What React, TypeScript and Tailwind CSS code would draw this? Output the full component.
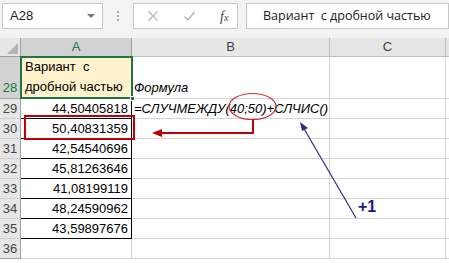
import React from "react";

const rows = [
  { n: "29", a: "44,50405818", b: "=СЛУЧМЕЖДУ(40;50)+СЛЧИС()" },
  { n: "30", a: "50,40831359", b: "" },
  { n: "31", a: "42,54540696", b: "" },
  { n: "32", a: "45,81263646", b: "" },
  { n: "33", a: "41,08199119", b: "" },
  { n: "34", a: "48,24590962", b: "" },
  { n: "35", a: "43,59897676", b: "" },
];

function FormulaBar() {
  return (
    <div className="h-[38px] bg-[#f3f3f3] flex items-start pt-[3px] pl-[2px]">
      <div className="w-[101px] h-[26px] bg-white border border-[#c6c6c6] flex items-center justify-between pl-[7px] pr-[7px]">
        <span className="text-[13px] text-[#222]">A28</span>
        <span className="w-0 h-0 border-l-[4px] border-r-[4px] border-t-[4px] border-l-transparent border-r-transparent border-t-[#777]" />
      </div>
      <div className="w-[30px] h-[26px] flex flex-col items-center justify-center gap-[2px]">
        <span className="w-[2px] h-[2px] bg-[#aaa]" />
        <span className="w-[2px] h-[2px] bg-[#aaa]" />
        <span className="w-[2px] h-[2px] bg-[#aaa]" />
      </div>
      <div className="w-[105px] h-[26px] bg-white border border-[#c6c6c6] flex items-center pl-[13px] gap-[24px]">
        <svg width="12" height="12" viewBox="0 0 12 12">
          <path d="M1.5 1.5 L10.5 10.5 M10.5 1.5 L1.5 10.5" stroke="#b5b5b5" strokeWidth="1.2" />
        </svg>
        <svg width="13" height="12" viewBox="0 0 13 12">
          <path d="M1.5 6.5 L5 10 L11.5 2" stroke="#b5b5b5" strokeWidth="1.4" fill="none" />
        </svg>
        <span className="font-['Liberation_Serif'] italic text-[14px] text-[#444]">f<span className="text-[10px]">x</span></span>
      </div>
      <div className="ml-[8px] flex-1 h-[26px] bg-white border border-[#c6c6c6] flex items-center pl-[16px]">
        <span className="text-[12.5px] text-[#222] whitespace-pre font-['Open_Sans']">Вариант  с дробной частью</span>
      </div>
    </div>
  );
}

export default function App() {
  return (
    <div className="relative w-[449px] h-[263px] overflow-hidden bg-white font-['Liberation_Sans',sans-serif] text-[13px] text-black">
      <FormulaBar />
      <div className="grid grid-cols-[21px_111px_198px_116px_20px] grid-rows-[19px_42px_repeat(8,20px)]">
        {/* header row */}
        <div className="bg-[#e6e6e6] border-r border-b border-[#a0a0a0] relative">
          <svg className="absolute right-[2px] bottom-[2px]" width="11" height="11" viewBox="0 0 11 11">
            <path d="M11 0 L11 11 L0 11 Z" fill="#b4b4b4" />
          </svg>
        </div>
        <div className="bg-[#d2d2d2] border-r border-b border-[#9e9e9e] flex items-center justify-center text-[13px] text-[#217346]">A</div>
        <div className="bg-[#e6e6e6] border-r border-b border-[#bcbcbc] flex items-center justify-center text-[13px] text-[#444]">B</div>
        <div className="bg-[#e6e6e6] border-r border-b border-[#bcbcbc] flex items-center justify-center text-[13px] text-[#444]">C</div>
        <div className="bg-[#e6e6e6] border-b border-[#bcbcbc]" />

        {/* row 28 */}
        <div className="bg-[#d2d2d2] border-r border-b border-[#a0a0a0] flex items-end justify-center pb-[1px] leading-[18px] text-[#217346]">28</div>
        <div className="bg-[#fff2cc] border-r border-b border-[#d4d4d4] flex flex-col justify-end pl-[4px] pb-[1px] leading-[20px] whitespace-pre">
          <span>Вариант  с</span>
          <span>дробной частью</span>
        </div>
        <div className="border-r border-b border-[#d4d4d4] flex items-end pl-[2px] pb-[1px] leading-[18px] italic">Формула</div>
        <div className="border-r border-b border-[#d4d4d4]" />
        <div className="border-b border-[#d4d4d4]" />

        {rows.map((r) => (
          <React.Fragment key={r.n}>
            <div className="bg-[#e6e6e6] border-r border-b border-[#a0a0a0] [border-bottom-color:#d0d0d0] flex items-center justify-center leading-[18px] text-[#444]">{r.n}</div>
            <div className="border-r border-b border-black flex items-center justify-end pr-[3px] leading-[18px]">{r.a}</div>
            <div className="border-r border-b border-[#d4d4d4] flex items-center pl-[2px] leading-[18px] italic whitespace-nowrap">{r.b}</div>
            <div className="border-r border-b border-[#d4d4d4]" />
            <div className="border-b border-[#d4d4d4]" />
          </React.Fragment>
        ))}

        {/* row 36 */}
        <div className="bg-[#e6e6e6] border-r border-b border-[#a0a0a0] flex items-center justify-center leading-[18px] text-[#444]">36</div>
        <div className="border-r border-b border-[#d4d4d4]" />
        <div className="border-r border-b border-[#d4d4d4]" />
        <div className="border-r border-b border-[#d4d4d4]" />
        <div className="border-b border-[#d4d4d4]" />
      </div>

      {/* selection box around A28 */}
      <div className="absolute left-[20px] top-[56px] w-[113px] h-[43px] border-2 border-[#217346]" />
      <div className="absolute left-[130px] top-[96px] w-[5px] h-[5px] bg-[#217346] border border-white" />

      {/* red box around A30 */}
      <div className="absolute left-[24px] top-[115px] w-[111px] h-[25px] border-2 border-[#c00000]" />

      <svg className="absolute inset-0" width="449" height="263" viewBox="0 0 449 263">
        <ellipse cx="252.5" cy="106.5" rx="23.5" ry="13" fill="none" stroke="#d03030" strokeWidth="1.2" />
        <path d="M253 119.5 L253 133 L160 133" fill="none" stroke="#c00000" strokeWidth="2" />
        <path d="M152 133 L162 129 L162 137 Z" fill="#c00000" />
        <path d="M356 218 L303 127" fill="none" stroke="#2a2a98" strokeWidth="1.2" />
        <path d="M300 122 L308 128 L302 131 Z" fill="#2a2a98" />
      </svg>

      <span className="absolute left-[358px] top-[199px] text-[16px] font-bold leading-[16px] text-[#1b1b86]">+1</span>
    </div>
  );
}
